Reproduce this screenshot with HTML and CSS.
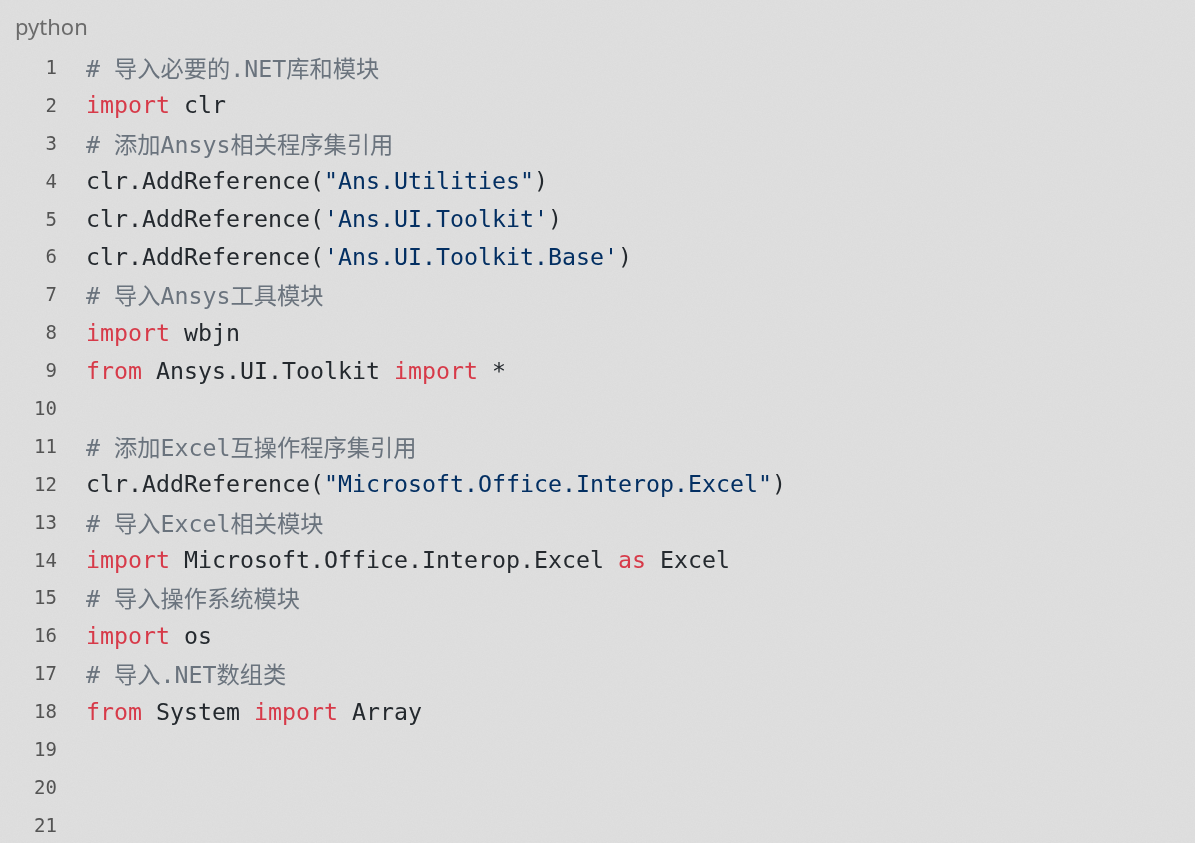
FILE: index.html
```html
<!DOCTYPE html>
<html lang="zh-CN">
<head>
<meta charset="utf-8">
<title>python</title>
<link rel="stylesheet" href="styles.css">
</head>
<body>
<svg class="grain" width="100%" height="100%" aria-hidden="true">
  <filter id="n">
    <feTurbulence type="fractalNoise" baseFrequency="0.8" numOctaves="2" seed="3"/>
    <feColorMatrix type="matrix" values="0 0 0 0 0.5  0 0 0 0 0.5  0 0 0 0 0.5  0 0 0 0.12 0"/>
  </filter>
  <rect width="100%" height="100%" filter="url(#n)"/>
</svg>
<main class="block">
  <div class="lang">python</div>
  <div class="code">
    <div class="line"><span class="ln">1</span><span class="src"><span class="c"># 导入必要的.NET库和模块</span></span></div>
    <div class="line"><span class="ln">2</span><span class="src"><span class="k">import</span> clr</span></div>
    <div class="line"><span class="ln">3</span><span class="src"><span class="c"># 添加Ansys相关程序集引用</span></span></div>
    <div class="line"><span class="ln">4</span><span class="src">clr.AddReference(<span class="s">"Ans.Utilities"</span>)</span></div>
    <div class="line"><span class="ln">5</span><span class="src">clr.AddReference(<span class="s">'Ans.UI.Toolkit'</span>)</span></div>
    <div class="line"><span class="ln">6</span><span class="src">clr.AddReference(<span class="s">'Ans.UI.Toolkit.Base'</span>)</span></div>
    <div class="line"><span class="ln">7</span><span class="src"><span class="c"># 导入Ansys工具模块</span></span></div>
    <div class="line"><span class="ln">8</span><span class="src"><span class="k">import</span> wbjn</span></div>
    <div class="line"><span class="ln">9</span><span class="src"><span class="k">from</span> Ansys.UI.Toolkit <span class="k">import</span> *</span></div>
    <div class="line"><span class="ln">10</span><span class="src"></span></div>
    <div class="line"><span class="ln">11</span><span class="src"><span class="c"># 添加Excel互操作程序集引用</span></span></div>
    <div class="line"><span class="ln">12</span><span class="src">clr.AddReference(<span class="s">"Microsoft.Office.Interop.Excel"</span>)</span></div>
    <div class="line"><span class="ln">13</span><span class="src"><span class="c"># 导入Excel相关模块</span></span></div>
    <div class="line"><span class="ln">14</span><span class="src"><span class="k">import</span> Microsoft.Office.Interop.Excel <span class="k">as</span> Excel</span></div>
    <div class="line"><span class="ln">15</span><span class="src"><span class="c"># 导入操作系统模块</span></span></div>
    <div class="line"><span class="ln">16</span><span class="src"><span class="k">import</span> os</span></div>
    <div class="line"><span class="ln">17</span><span class="src"><span class="c"># 导入.NET数组类</span></span></div>
    <div class="line"><span class="ln">18</span><span class="src"><span class="k">from</span> System <span class="k">import</span> Array</span></div>
    <div class="line"><span class="ln">19</span><span class="src"></span></div>
    <div class="line"><span class="ln">20</span><span class="src"></span></div>
    <div class="line"><span class="ln">21</span><span class="src"></span></div>
  </div>
</main>
</body>
</html>
```
FILE: styles.css
```css
html, body {
  margin: 0;
  padding: 0;
  background: #e0e0e0;
  overflow: hidden;
  height: 100%;
}

.grain {
  position: fixed;
  top: 0;
  left: 0;
  pointer-events: none;
  z-index: 0;
}

.block {
  position: relative;
  z-index: 1;
  display: flex;
  flex-direction: column;
}

.lang {
  font-family: "Noto Sans", "Open Sans", sans-serif;
  font-size: 22px;
  color: #6b6b6b;
  padding: 11px 0 0 15px;
  height: 37px;
  line-height: 30px;
  box-sizing: border-box;
}

.code {
  display: flex;
  flex-direction: column;
  padding-top: 11px;
}

.line {
  display: flex;
  align-items: center;
  height: 37.9px;
}

.ln {
  width: 57px;
  flex: none;
  text-align: right;
  font-family: "DejaVu Sans Mono", monospace;
  font-size: 19px;
  color: #545454;
}

.src {
  margin-left: 29px;
  white-space: pre;
  font-family: "DejaVu Sans Mono", "Noto Sans CJK SC", monospace;
  font-size: 23.25px;
  color: #24292e;
}

.k { color: #d73a49; }
.s { color: #032f62; }
.c { color: #6a737d; }
```
